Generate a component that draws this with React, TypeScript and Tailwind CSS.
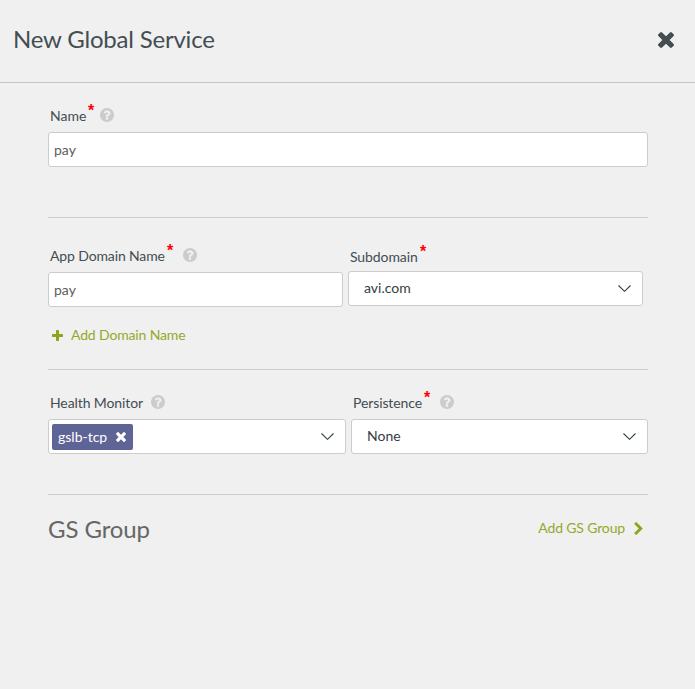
import type { ReactNode } from "react";

function TimesIcon({ className }: { className: string }) {
  return (
    <svg viewBox="110 366 1188 1188" className={className} fill="currentColor">
      <path d="M1298 1322q0 40-28 68l-136 136q-28 28-68 28t-68-28l-294-294-294 294q-28 28-68 28t-68-28l-136-136q-28-28-28-68t28-68l294-294-294-294q-28-28-28-68t28-68l136-136q28-28 68-28t68 28l294 294 294-294q28-28 68-28t68 28l136 136q28 28 28 68t-28 68l-294 294 294 294q28 28 28 68z" />
    </svg>
  );
}

function PlusIcon({ className }: { className: string }) {
  return (
    <svg viewBox="192 128 1408 1408" className={className} fill="currentColor">
      <path d="M1600 736v192q0 40-28 68t-68 28h-416v416q0 40-28 68t-68 28h-192q-40 0-68-28t-28-68v-416h-416q-40 0-68-28t-28-68v-192q0-40 28-68t68-28h416v-416q0-40 28-68t68-28h192q40 0 68 28t28 68v416h416q40 0 68 28t28 68z" />
    </svg>
  );
}

function HelpIcon({ className }: { className: string }) {
  return (
    <svg viewBox="128 128 1536 1536" className={`size-3.5 shrink-0 text-[#cccccc] ${className}`} fill="currentColor">
      <path d="M1024 1376v-192q0-14-9-23t-23-9h-192q-14 0-23 9t-9 23v192q0 14 9 23t23 9h192q14 0 23-9t9-23zm256-672q0-88-55.5-163t-138.5-116-170-41q-243 0-371 213-15 24 8 42l132 100q7 6 19 6 16 0 25-12 53-68 86-92 34-24 86-24 48 0 85.5 26t37.5 59q0 38-20 61t-68 45q-63 28-115.5 86.5t-52.5 125.5v36q0 14 9 23t23 9h192q14 0 23-9t9-23q0-19 21.5-49.5t54.5-49.5q32-18 49-28.5t46-35 44.5-48 28-60.5 12.5-81zm384 192q0 209-103 385.5t-279.5 279.5-385.5 103-385.5-103-279.5-279.5-103-385.5 103-385.5 279.5-279.5 385.5-103 385.5 103 279.5 279.5 103 385.5z" />
    </svg>
  );
}

function ChevronRightIcon({ className }: { className: string }) {
  return (
    <svg viewBox="346 26 1036 1612" className={className} fill="currentColor">
      <path d="M1363 877l-742 742q-19 19-45 19t-45-19l-166-166q-19-19-19-45t19-45l531-531-531-531q-19-19-19-45t19-45l166-166q19-19 45-19t45 19l742 742q19 19 19 45t-19 45z" />
    </svg>
  );
}

function CaretIcon() {
  return (
    <svg viewBox="0 0 13 7" className="h-[7px] w-[13px] shrink-0" fill="none" stroke="#334047" strokeWidth="1.1">
      <path d="M0.5 0.5 6.5 6.3 12.5 0.5" />
    </svg>
  );
}

function Required({ className }: { className: string }) {
  return (
    <span className={`font-['Liberation_Sans',sans-serif] text-base leading-4 font-bold text-[#ff0000] ${className}`}>*</span>
  );
}

function Label({ children, className }: { children: ReactNode; className: string }) {
  return <div className={`flex h-5 whitespace-nowrap text-sm leading-5 text-[#434d52] ${className}`}>{children}</div>;
}

const box = "flex h-[35px] items-center rounded-[3px] border border-[#cccccc] bg-white text-sm";

export default function App() {
  return (
    <div className="h-[689px] w-[695px] overflow-hidden bg-[#f0f0f0] font-['Lato',sans-serif] text-[#434d52]">
      <header className="flex h-[83px] justify-between border-b border-[#c4c4c4] pr-[21px] pl-[13px]">
        <h1 className="pt-[23px] text-2xl leading-8 tracking-[-0.2px] whitespace-nowrap">New Global Service</h1>
        <TimesIcon className="mt-8 size-4" />
      </header>
      <main className="pr-[47px] pl-12">
        <section className="h-[135px] border-b border-[#cccccc] pt-[23px]">
          <Label className="pl-0.5">
            <span className="w-[38px]">Name</span>
            <Required className="-mt-[3px]" />
            <HelpIcon className="mt-0.5 ml-[6px]" />
          </Label>
          <div className={`${box} mt-1.5 pl-[5px] text-[#5c5c5c]`}>pay</div>
        </section>

        <section className="h-[152px] border-b border-[#cccccc] pt-[28px]">
          <div className="flex gap-[5px]">
            <div className="w-[295px]">
              <Label className="pl-0.5">
                <span className="w-[117px] tracking-[-0.13px]">App Domain Name</span>
                <Required className="-mt-[3px]" />
                <HelpIcon className="mt-0.5 ml-[10px]" />
              </Label>
              <div className={`${box} mt-1.5 pl-[5px] text-[#5c5c5c]`}>pay</div>
            </div>
            <div className="w-[295px]">
              <Label className="pt-px pl-0.5">
                <span className="w-[70px] tracking-[-0.1px]">Subdomain</span>
                <Required className="-mt-[3px]" />
              </Label>
              <div className={`${box} mt-[5px] justify-between pr-[11px] pl-[15px]`}>
                <span className="pb-0.5 text-[#333d42]">avi.com</span>
                <CaretIcon />
              </div>
            </div>
          </div>
          <div className="mt-[18px] flex h-5 items-center pl-1 text-sm text-[#93a92c]">
            <PlusIcon className="size-[11px] text-[#8ca61c]" />
            <span className="ml-2 tracking-[-0.15px]">Add Domain Name</span>
          </div>
        </section>

        <section className="h-[125px] border-b border-[#cccccc] pt-[23px]">
          <div className="flex gap-[5px]">
            <div className="w-[298px]">
              <Label className="pl-0.5">
                <span className="w-[94px] tracking-[-0.1px]">Health Monitor</span>
                <HelpIcon className="mt-0.5 ml-[7px]" />
              </Label>
              <div className={`${box} mt-1.5 justify-between pr-[11px] pl-[3px]`}>
                <span className="flex h-[26px] w-[81px] items-center justify-between rounded-[2px] bg-[#5f6496] pr-[7px] pl-1.5 text-white">
                  gslb-tcp
                  <TimesIcon className="size-2.5" />
                </span>
                <CaretIcon />
              </div>
            </div>
            <div className="w-[297px]">
              <Label className="pl-0.5">
                <span className="w-[71px] tracking-[-0.1px]">Persistence</span>
                <Required className="-mt-[3px]" />
                <HelpIcon className="mt-0.5 ml-[10px]" />
              </Label>
              <div className={`${box} mt-1.5 justify-between pr-[11px] pl-[15px]`}>
                <span className="pb-0.5 text-[#333d42]">None</span>
                <CaretIcon />
              </div>
            </div>
          </div>
        </section>

        <section className="flex items-start justify-between pr-[5px]">
          <h2 className="pt-[18px] text-2xl leading-8 tracking-[-0.1px] text-[#666666]">GS Group</h2>
          <div className="mt-[23px] flex h-5 items-center text-sm text-[#93a92c]">
            <span className="tracking-[-0.15px]">Add GS Group</span>
            <ChevronRightIcon className="ml-[9px] h-[13px] w-[9px] text-[#8ca61c]" />
          </div>
        </section>
      </main>
    </div>
  );
}
